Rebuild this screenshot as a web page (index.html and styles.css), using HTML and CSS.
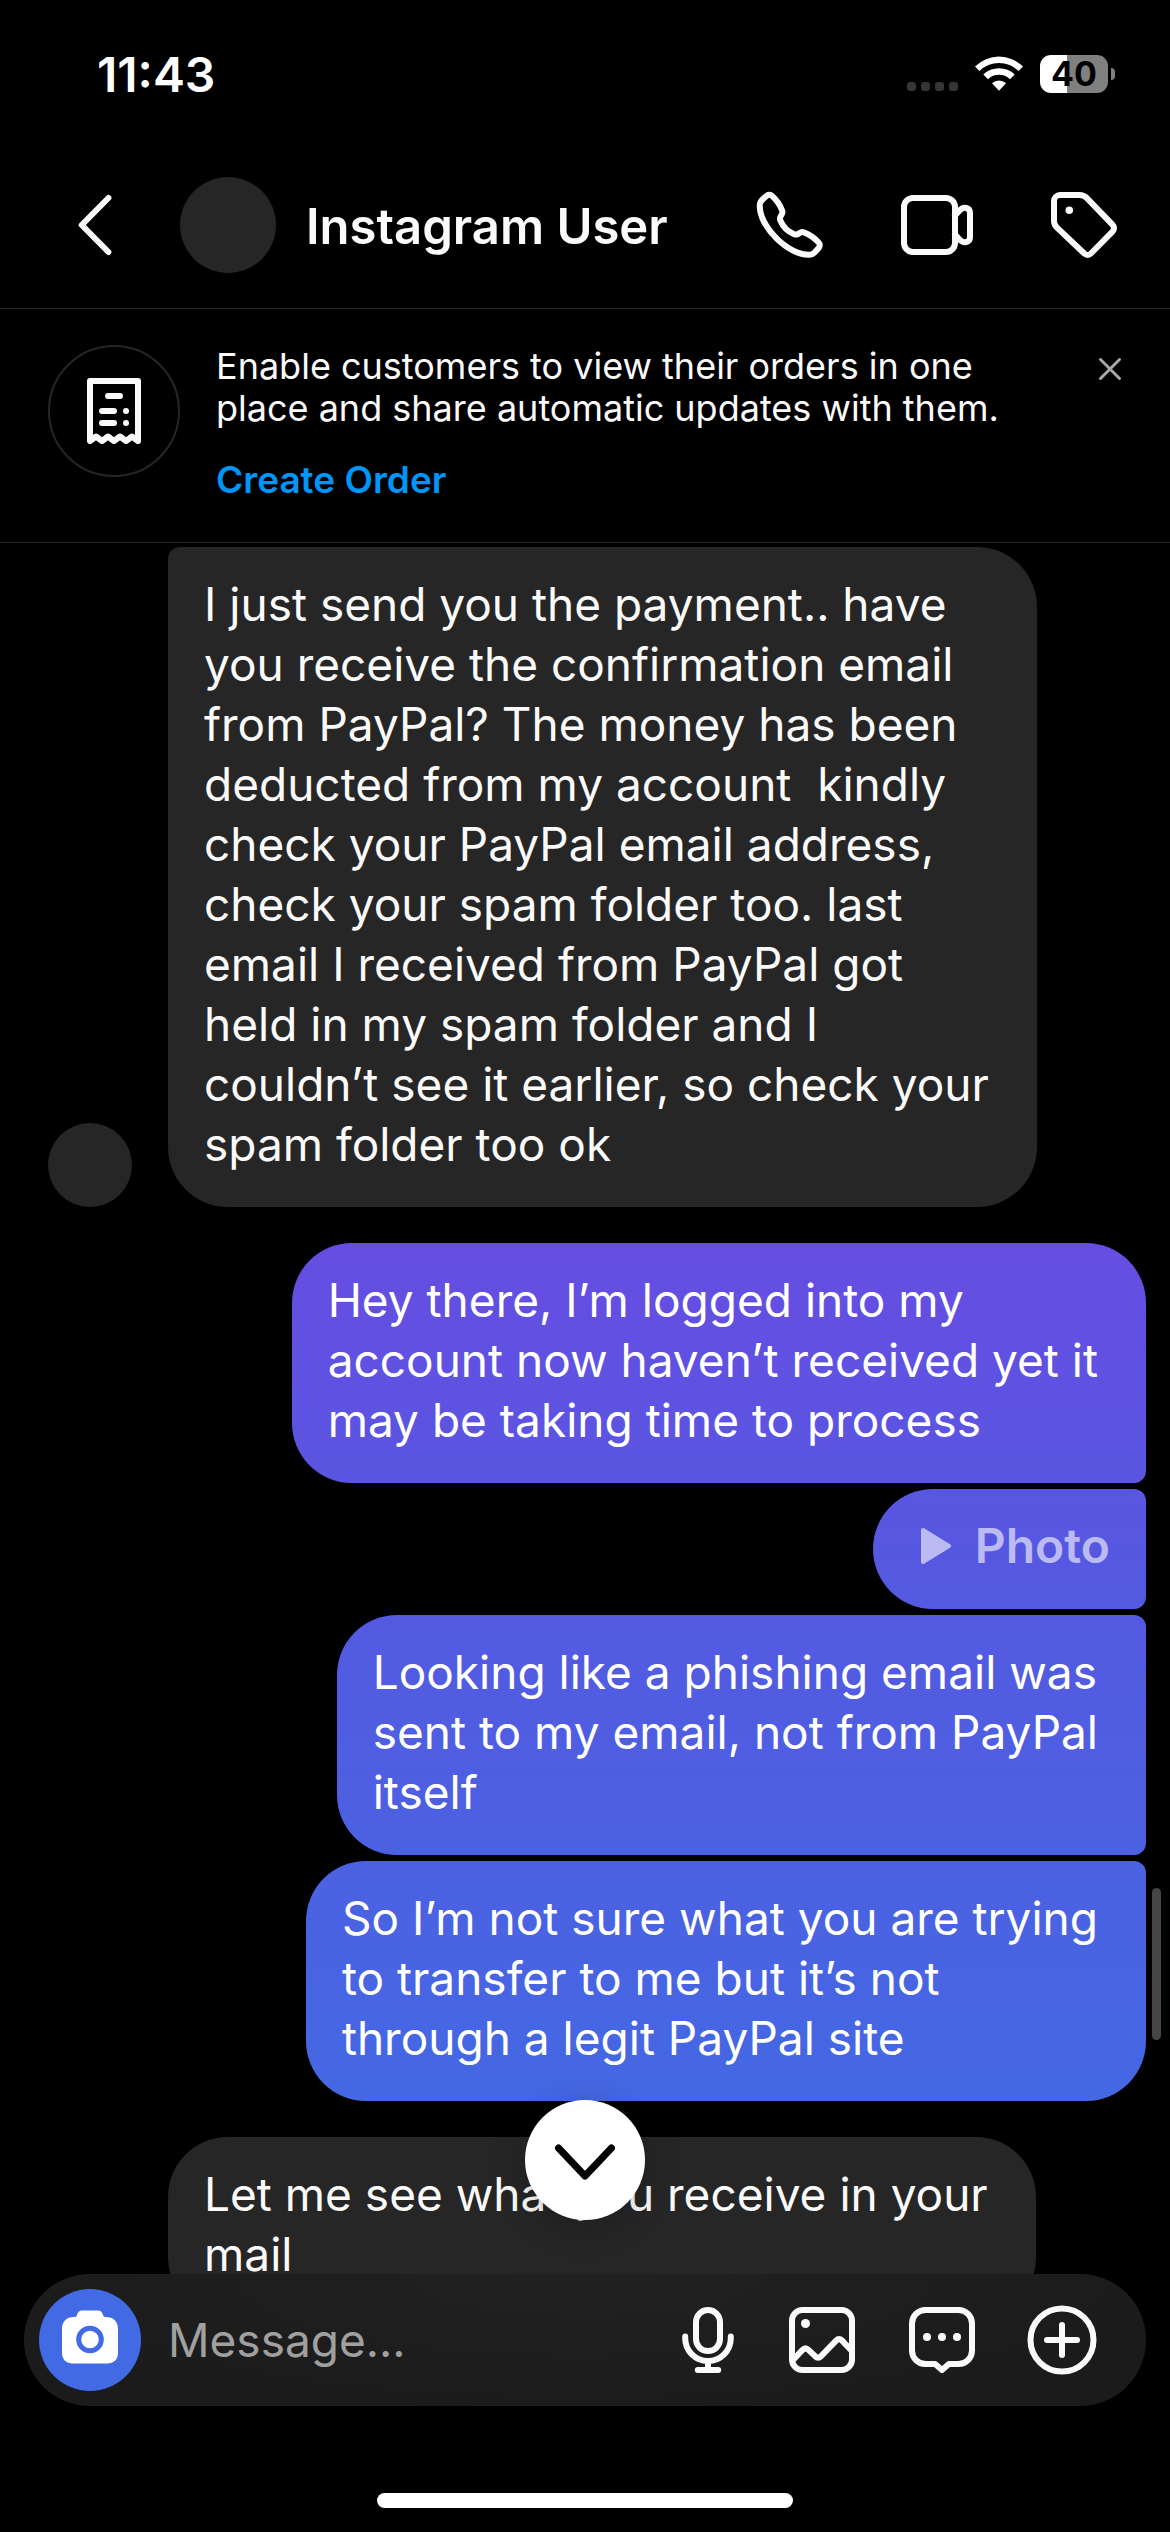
FILE: index.html
```html
<!DOCTYPE html>
<html lang="en">
<head>
<meta charset="utf-8">
<meta name="viewport" content="width=device-width, initial-scale=1">
<title>Instagram User</title>
<link rel="stylesheet" href="styles.css">
</head>
<body>
<div class="status">
  <time class="clock">11:43</time>
  <div class="indicators">
    <div class="signal"><i></i><i></i><i></i><i></i></div>
    <svg class="wifi" viewBox="0 0 48 36" aria-hidden="true">
      <path d="M0 11.500A34 34 0 0 1 48 11.500L43.500 16A27.600 27.600 0 0 0 4.500 16Z"/>
      <path d="M8.300 19.600A22.500 22.500 0 0 1 39.700 19.600L35 24.300A15.800 15.800 0 0 0 13 24.300Z"/>
      <path d="M17 28.200A10.300 10.300 0 0 1 31 28.200L24 35.700Z"/>
    </svg>
    <div class="power"><span class="battery">40</span><span class="nub"></span></div>
  </div>
</div>

<header class="header">
  <button class="icon-button" aria-label="Back"><svg class="icon" viewBox="0 0 24 24"><path d="M16.800 3L7.900 12l8.900 9"/></svg></button>
  <div class="avatar"></div>
  <h1 class="name">Instagram User</h1>
  <div class="actions">
    <button class="icon-button" aria-label="Audio call"><svg class="icon solid" viewBox="0 0 24 24"><path d="M18.227 22.912c-4.913 0-9.286-3.627-11.486-5.828C4.486 14.830.731 10.291.921 5.231a3.289 3.289 0 0 1 .908-2.138 17.116 17.116 0 0 1 1.865-1.710 2.307 2.307 0 0 1 3.004.174 13.283 13.283 0 0 1 3.658 5.325 2.551 2.551 0 0 1-.190 1.941l-.455.853a.463.463 0 0 0-.024.387 7.570 7.570 0 0 0 4.077 4.075.455.455 0 0 0 .386-.024l.853-.455a2.548 2.548 0 0 1 1.940-.190 13.278 13.278 0 0 1 5.326 3.658 2.309 2.309 0 0 1 .174 3.003 17.319 17.319 0 0 1-1.710 1.866 3.290 3.290 0 0 1-2.138.910 10.270 10.270 0 0 1-.368.006Zm-13.144-20a.270.270 0 0 0-.167.054A15.121 15.121 0 0 0 3.280 4.470a1.289 1.289 0 0 0-.360.836c-.161 4.301 3.210 8.340 5.235 10.364s6.060 5.403 10.366 5.236a1.284 1.284 0 0 0 .835-.360 15.217 15.217 0 0 0 1.504-1.637.324.324 0 0 0-.047-.410 11.620 11.620 0 0 0-4.457-3.119.545.545 0 0 0-.411.044l-.854.455a2.452 2.452 0 0 1-2.071.116 9.571 9.571 0 0 1-5.189-5.188 2.457 2.457 0 0 1 .115-2.071l.456-.855a.544.544 0 0 0 .043-.410 11.629 11.629 0 0 0-3.118-4.458.360.360 0 0 0-.244-.095Z"/></svg></button>
    <button class="icon-button" aria-label="Video call"><svg class="icon" viewBox="0 0 24 24"><rect x="1" y="3" width="17" height="18" rx="3"/><path d="M18 8.800l1.600-1.700C20.800 5.800 23 6 23 8v8c0 2-2.200 2.200-3.400.900L18 15.200"/></svg></button>
    <button class="icon-button" aria-label="Label chat"><svg class="icon" viewBox="0 0 24 24"><path d="M4 2h6.500c.9 0 1.700.3 2.300.9l8.600 8.900c.8.8.8 1.700.1 2.400l-7.200 7.300c-.7.700-1.500.700-2.200 0L2.900 12.800c-.6-.6-.9-1.300-.9-2.100V4c0-1.100.9-2 2-2z"/><circle class="dot" cx="7.100" cy="7.100" r="1.250"/></svg></button>
  </div>
</header>

<section class="banner">
  <div class="banner-icon"><svg class="icon" viewBox="0 0 24 24" aria-hidden="true"><path d="M4 22V2h16v20l-2-1.500L16 22l-2-1.500L12 22l-2-1.500L8 22l-2-1.500zM10 7h4M8 12h4M8 16h4M16 12h.010M16 16h.010"/></svg></div>
  <div class="banner-body">
    <p class="banner-text">Enable customers to view their orders in one<br>place and share automatic updates with them.</p>
    <a class="banner-link" href="#">Create Order</a>
  </div>
  <button class="close" aria-label="Dismiss"><svg viewBox="0 0 24 24"><path d="M2.500 2.500l19 19M21.500 2.500l-19 19"/></svg></button>
</section>

<main class="chat">
  <div class="row">
    <div class="avatar small"></div>
    <p class="bubble received joined-top">I just send you the payment.. have<br>you receive the confirmation email<br>from PayPal? The money has been<br>deducted from my account &nbsp;kindly<br>check your PayPal email address,<br>check your spam folder too. last<br>email I received from PayPal got<br>held in my spam folder and I<br>couldn’t see it earlier, so check your<br>spam folder too ok</p>
  </div>
  <div class="group">
    <p class="bubble sent joined-bottom">Hey there, I’m logged into my<br>account now haven’t received yet it<br>may be taking time to process</p>
    <button class="bubble sent photo joined-top joined-bottom"><svg class="play" viewBox="0 0 30 36" aria-hidden="true"><path d="M2 2l26 16L2 34z"/></svg>Photo</button>
    <p class="bubble sent joined-top joined-bottom">Looking like a phishing email was<br>sent to my email, not from PayPal<br>itself</p>
    <p class="bubble sent joined-top">So I’m not sure what you are trying<br>to transfer to me but it’s not<br>through a legit PayPal site</p>
  </div>
  <div class="row">
    <div class="avatar small hidden"></div>
    <p class="bubble received">Let me see what you receive in your<br>mail</p>
  </div>
  <div class="scroll-thumb"></div>
  <button class="jump" aria-label="Scroll to latest"><svg viewBox="0 0 120 120"><path d="M33.500 48L60 76l26.500-28"/></svg></button>
</main>

<footer class="footer">
  <form class="composer">
    <button class="camera" type="button" aria-label="Camera"><svg viewBox="0 0 60 60"><path class="camera-body" d="M22 .500h16c3 0 4.200 2 5 4.500.5 1.500 1.200 2 3 2 7.500 0 12 4.500 12 12v23.500c0 7-4 11-11 11H13c-7 0-11-4-11-11V19C2 11.500 6.500 7 14 7c1.800 0 2.500-.5 3-2 .8-2.500 2-4.500 5-4.500z"/><circle class="camera-lens" cx="30" cy="29.500" r="11.300"/></svg></button>
    <input class="field" type="text" placeholder="Message..." aria-label="Message">
    <div class="tools">
      <button class="icon-button narrow" type="button" aria-label="Voice message"><svg class="icon" viewBox="0 0 24 24"><rect x="8" y="2" width="8" height="13.700" rx="4"/><path d="M4.400 10.800v.600a7.600 7.600 0 0 0 15.200 0v-.600M12 19v3M8.600 22h6.800"/></svg></button>
      <button class="icon-button" type="button" aria-label="Gallery"><svg class="icon" viewBox="0 0 24 24"><rect x="2" y="2" width="20" height="20" rx="3.500"/><path d="M2.500 18.500l3-3.200q1-1 2 0l2.200 2.100q1 .9 2 0l5-5.200q1-1 2 0l3 3.200"/><circle class="dot" cx="6.500" cy="6.500" r="1.500"/></svg></button>
      <button class="icon-button" type="button" aria-label="Saved replies"><svg class="icon" viewBox="0 0 24 24"><path d="M6.500 2h11A4.500 4.500 0 0 1 22 6.500v9a4.500 4.500 0 0 1-4.500 4.500h-3.200L12 22l-2.300-2H6.500A4.500 4.500 0 0 1 2 15.500v-9A4.500 4.500 0 0 1 6.500 2z"/><circle class="dot" cx="7" cy="11" r="1.350"/><circle class="dot" cx="12" cy="11" r="1.350"/><circle class="dot" cx="17" cy="11" r="1.350"/></svg></button>
      <button class="icon-button" type="button" aria-label="More"><svg class="icon" viewBox="0 0 24 24"><circle cx="12" cy="12" r="10.500"/><path d="M12 7v10M7 12h10"/></svg></button>
    </div>
  </form>
  <div class="home"></div>
</footer>
</body>
</html>
```

FILE: styles.css
```css
* { box-sizing: border-box; }

body {
  margin: 0;
  height: 100vh;
  display: flex;
  flex-direction: column;
  background: #000;
  color: #fafafa;
  font-family: Inter, "Liberation Sans", sans-serif;
  font-size: 46px;
  line-height: 60px;
}

h1, p { margin: 0; }

button {
  border: 0;
  padding: 0;
  background: none;
  color: inherit;
  font: inherit;
}

svg { display: block; }

/* Status bar */
.status {
  display: flex;
  justify-content: space-between;
  padding: 45px 55px 36px 97px;
  flex: none;
}

.clock { color: #fff; font-size: 48px; font-weight: 600; }

.indicators {
  display: flex;
  align-items: flex-start;
  gap: 17px;
  padding-top: 10px;
}

.signal { display: flex; gap: 5px; padding-top: 27px; }
.signal i { width: 9px; height: 9px; border-radius: 3px; background: #353535; }
.wifi { width: 48px; height: 36px; fill: #fff; }
.power { display: flex; align-items: center; gap: 3px; }

.battery {
  width: 68px;
  height: 38px;
  border-radius: 11px;
  background: linear-gradient(90deg, #fff 40%, #808080 40%);
  color: #000;
  font-size: 34px;
  font-weight: 700;
  line-height: 38px;
  text-align: center;
}

.nub { width: 4px; height: 12px; border-radius: 0 6px 6px 0; background: #808080; }

/* Header */
.header {
  display: flex;
  align-items: center;
  height: 168px;
  padding: 0 50px 0 58px;
  border-bottom: 1px solid #262626;
  flex: none;
}

.icon-button { width: 72px; height: 72px; flex: none; display: flex; justify-content: center; }
.icon-button.narrow { width: 60px; }

.icon {
  width: 72px;
  height: 72px;
  flex: none;
  fill: none;
  stroke: #fafafa;
  stroke-width: 2;
  stroke-linecap: round;
  stroke-linejoin: round;
}

.icon.solid, .icon .dot { fill: #fafafa; stroke: none; }

.avatar {
  width: 96px;
  height: 96px;
  margin-left: 50px;
  border-radius: 50%;
  background: #262626;
  flex: none;
}

.name {
  flex: 1;
  margin-left: 30px;
  padding-top: 4px;
  font-size: 49px;
  font-weight: 600;
  white-space: nowrap;
}

.actions { display: flex; gap: 75px; }

/* Order banner */
.banner {
  display: flex;
  align-items: flex-start;
  padding: 36px 48px 41px;
  border-bottom: 1px solid #262626;
  flex: none;
}

.banner-icon {
  display: flex;
  align-items: center;
  justify-content: center;
  width: 132px;
  height: 132px;
  border: 2px solid #262626;
  border-radius: 50%;
  flex: none;
}

.banner-body { flex: 1; margin-left: 36px; font-size: 36px; line-height: 42px; }

.banner-link {
  display: block;
  margin-top: 30px;
  color: #0095f6;
  font-size: 37px;
  font-weight: 600;
  text-decoration: none;
}

.close { padding-top: 12px; }
.close svg { width: 24px; height: 24px; fill: none; stroke: #a8a8a8; stroke-width: 3; stroke-linecap: round; }

/* Conversation */
.chat {
  position: relative;
  flex: 1;
  min-height: 0;
  display: flex;
  flex-direction: column;
  gap: 36px;
  padding: 4px 24px 0 48px;
  overflow: hidden;
}

.row { display: flex; align-items: flex-end; gap: 36px; flex: none; }
.avatar.small { width: 84px; height: 84px; margin: 0; }
.avatar.hidden { visibility: hidden; }
.group { display: flex; flex-direction: column; align-items: flex-end; gap: 6px; flex: none; }
.bubble { padding: 27px 48px 33px 36px; border-radius: 60px; }
.received { background: #262626; }

.sent {
  background: linear-gradient(#664de2 49%, #535ae1 64%, #4468e3 83%) fixed;
  color: #fff;
}

.received.joined-top { border-top-left-radius: 12px; }
.sent.joined-top { border-top-right-radius: 12px; }
.sent.joined-bottom { border-bottom-right-radius: 12px; }

.photo {
  display: flex;
  align-items: center;
  gap: 24px;
  padding: 27px 36px 33px 48px;
  color: #bbbaf3;
  font-size: 48px;
  font-weight: 600;
}

.play { width: 30px; height: 36px; fill: #bbbaf3; stroke: #bbbaf3; stroke-width: 4; stroke-linejoin: round; }

.scroll-thumb {
  position: absolute;
  right: 9px;
  bottom: 234px;
  width: 9px;
  height: 152px;
  border-radius: 5px;
  background: #464646;
}

.jump {
  position: absolute;
  left: calc(50% - 60px);
  bottom: 54px;
  width: 120px;
  height: 120px;
  border-radius: 50%;
  background: #fff;
  box-shadow: 0 6px 36px rgba(0, 0, 0, .2);
}

.jump svg { fill: none; stroke: #000; stroke-width: 7; stroke-linecap: round; stroke-linejoin: round; }

/* Composer */
.footer { padding: 0 24px 24px; flex: none; }

.composer {
  display: flex;
  align-items: center;
  height: 132px;
  padding: 0 48px 0 15px;
  border-radius: 66px;
  background: radial-gradient(ellipse at 50% 0, #212121, #1b1b1b 80%);
}

.camera {
  display: flex;
  align-items: center;
  justify-content: center;
  width: 102px;
  height: 102px;
  border-radius: 50%;
  background: #426ae4;
  flex: none;
}

.camera svg { width: 60px; height: 60px; }
.camera-body { fill: #fff; }
.camera-lens { fill: #fff; stroke: #426ae4; stroke-width: 5; }

.field {
  flex: 1;
  min-width: 0;
  margin-left: 27px;
  padding: 0;
  border: 0;
  outline: 0;
  background: none;
  color: #fafafa;
  font: inherit;
}

.field::placeholder { color: #a0a0a0; opacity: 1; }
.tools { display: flex; gap: 48px; }

.home {
  width: 37%;
  height: 15px;
  margin: 87px auto 0;
  border-radius: 8px;
  background: #fff;
}
```
